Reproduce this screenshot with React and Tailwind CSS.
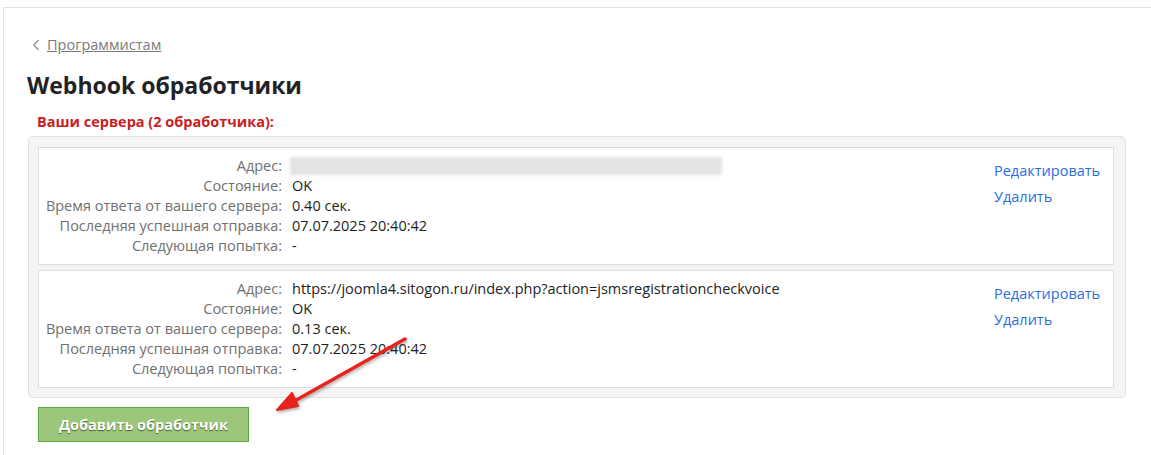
import React from "react";

const rows = [
  {
    address: null,
    state: "OK",
    time: "0.40 сек.",
    last: "07.07.2025 20:40:42",
    next: "-",
  },
  {
    address: "https://joomla4.sitogon.ru/index.php?action=jsmsregistrationcheckvoice",
    state: "OK",
    time: "0.13 сек.",
    last: "07.07.2025 20:40:42",
    next: "-",
  },
];

const labels = [
  "Адрес:",
  "Состояние:",
  "Время ответа от вашего сервера:",
  "Последняя успешная отправка:",
  "Следующая попытка:",
];

const HookCard = ({ hook }) => {
  const values = [hook.address, hook.state, hook.time, hook.last, hook.next];
  return (
    <div className="flex bg-white border border-[#dcdcdc] pt-[8px] pb-[8px]">
      <div className="flex-1 grid grid-cols-[243px_1fr] gap-x-[10px] text-[14.5px] leading-[20px]">
        {labels.map((l, i) => (
          <React.Fragment key={l}>
            <div className="text-right text-[#707070] whitespace-nowrap">{l}</div>
            <div className="text-[#1e1e1e] whitespace-nowrap">
              {values[i] === null ? (
                <div className="h-[20px] w-[432px] py-[1px] -ml-[2px]">
                  <div className="h-full w-full bg-[#e3e3e3] blur-[1.5px]" />
                </div>
              ) : (
                values[i]
              )}
            </div>
          </React.Fragment>
        ))}
      </div>
      <div className="w-[119px] flex flex-col gap-[6px] pt-[5px] text-[14.5px] leading-[20px] text-[#2a6ee0] whitespace-nowrap">
        <a className="cursor-pointer">Редактировать</a>
        <a className="cursor-pointer">Удалить</a>
      </div>
    </div>
  );
};

export default function App() {
  return (
    <div
      className="relative w-[1151px] h-[455px] bg-white overflow-hidden"
      style={{ fontFamily: '"Open Sans", "Noto Sans", sans-serif' }}
    >
      <div className="ml-[3px] mt-[7px] h-full border-l border-t border-[#e2e2e2] pl-[23px] pr-[25px]">
        {/* breadcrumb */}
        <div className="pt-[27px] flex items-center gap-[6px] text-[14.5px] leading-[20px] text-[#7a7a7a]">
          <svg width="9" height="12" viewBox="0 0 9 12" className="ml-[5px]">
            <path d="M6.5 1 L1.8 6 L6.5 11" fill="none" stroke="#8a8a8a" strokeWidth="1.2" />
          </svg>
          <span className="underline">Программистам</span>
        </div>

        <h1 className="mt-[15px] text-[23px] leading-[30px] font-bold text-[#222]">Webhook обработчики</h1>

        <div className="mt-[12px] ml-[10px] text-[14.5px] leading-[20px] font-bold text-[#c8211f]">
          Ваши сервера (2 обработчика):
        </div>

        {/* panel */}
        <div className="mt-[4px] ml-[1px] rounded-[5px] border border-[#e2e2e2] bg-[#f4f4f4] pt-[10px] pb-[9px] pl-[9px] pr-[11px] flex flex-col gap-[5px]">
          {rows.map((h, i) => (
            <HookCard key={i} hook={h} />
          ))}
        </div>

        <button className="mt-[9px] ml-[11px] w-[211px] h-[35px] border border-[#58a83c] bg-[#9cc77a] text-white text-[14.5px] font-bold [text-shadow:0_1px_1px_rgba(0,0,0,0.55)]">
          Добавить обработчик
        </button>
      </div>

      {/* red arrow annotation */}
      <svg className="absolute left-0 top-0 pointer-events-none" width="1151" height="455">
        <g style={{ filter: "drop-shadow(1px 2px 1.5px rgba(0,0,0,0.3))" }}>
          <line x1="405" y1="339" x2="291" y2="403" stroke="#e8221d" strokeWidth="3.5" strokeLinecap="round" />
          <path d="M277 410 L292 393 L298 406 Z" fill="#e8221d" stroke="#e8221d" strokeWidth="2" strokeLinejoin="round" />
        </g>
      </svg>
    </div>
  );
}
